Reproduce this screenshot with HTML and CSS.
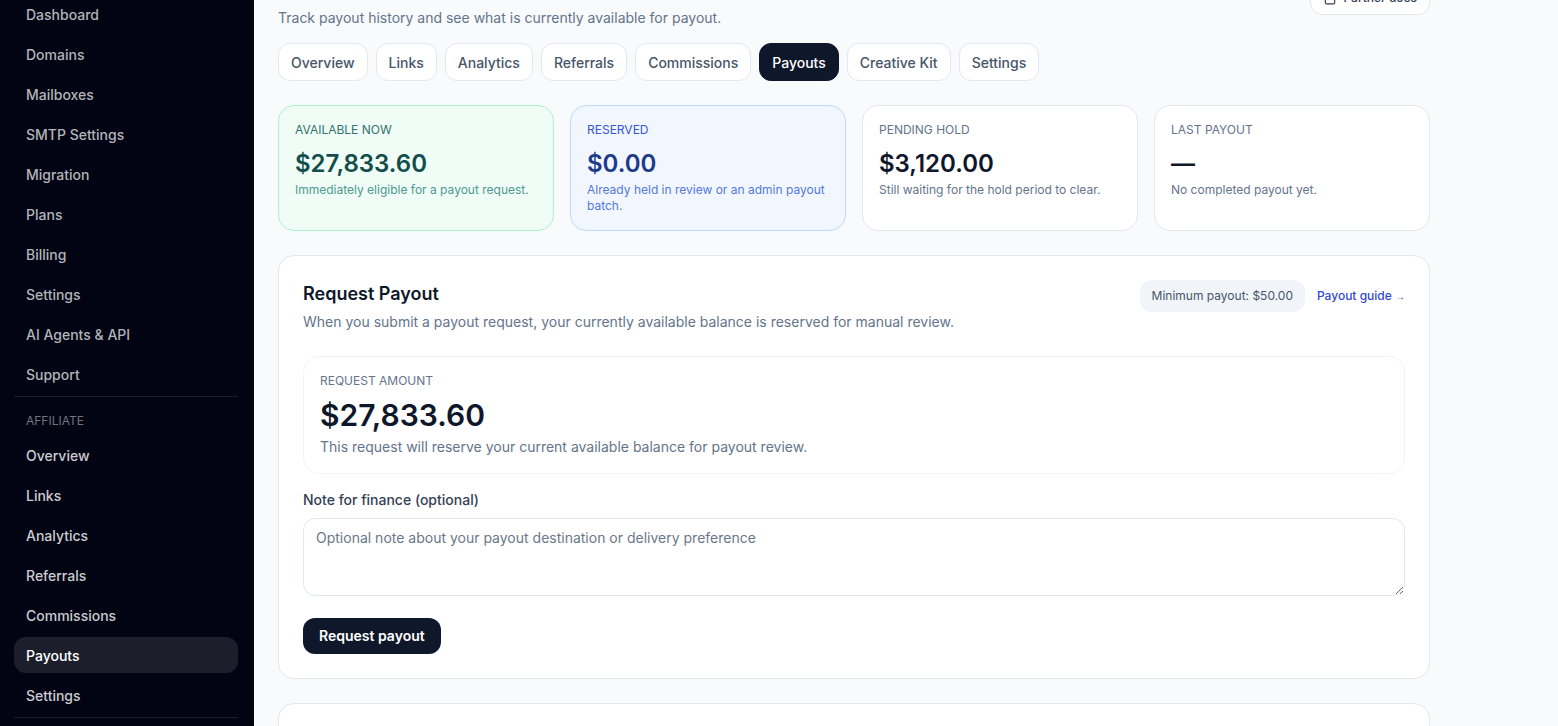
FILE: index.html
```html
<!DOCTYPE html>
<html lang="en">
<head>
  <meta charset="UTF-8">
  <meta name="viewport" content="width=device-width, initial-scale=1.0">
  <title>Payouts</title>
  <link rel="stylesheet" href="styles.css">
</head>
<body>
  <div class="app">
    <aside class="sidebar">
      <nav class="side-nav">
        <a href="#">Dashboard</a>
        <a href="#">Domains</a>
        <a href="#">Mailboxes</a>
        <a href="#">SMTP Settings</a>
        <a href="#">Migration</a>
        <a href="#">Plans</a>
        <a href="#">Billing</a>
        <a href="#">Settings</a>
        <a href="#">AI Agents &amp; API</a>
        <a href="#">Support</a>
      </nav>
      <nav class="side-nav side-nav-affiliate">
        <p class="side-title">Affiliate</p>
        <a href="#">Overview</a>
        <a href="#">Links</a>
        <a href="#">Analytics</a>
        <a href="#">Referrals</a>
        <a href="#">Commissions</a>
        <a href="#" class="active">Payouts</a>
        <a href="#">Settings</a>
      </nav>
      <div class="side-footer"></div>
    </aside>

    <main class="main">
      <div class="content">
        <header class="page-header">
          <div>
            <h1>Payouts</h1>
            <p class="subtitle">Track payout history and see what is currently available for payout.</p>
          </div>
          <a href="#" class="docs-link">
            <svg width="14" height="14" viewBox="0 0 24 24" fill="none" stroke="currentColor" stroke-width="2" stroke-linecap="round" stroke-linejoin="round">
              <path d="M6 2h8l6 6v12a2 2 0 0 1-2 2H6a2 2 0 0 1-2-2V4a2 2 0 0 1 2-2z"/>
              <path d="M14 2v6h6"/>
            </svg>
            Partner docs
          </a>
        </header>

        <nav class="tabs">
          <a href="#">Overview</a>
          <a href="#">Links</a>
          <a href="#">Analytics</a>
          <a href="#">Referrals</a>
          <a href="#">Commissions</a>
          <a href="#" class="active">Payouts</a>
          <a href="#">Creative Kit</a>
          <a href="#">Settings</a>
        </nav>

        <section class="stats">
          <div class="stat stat-green">
            <p class="label">Available now</p>
            <p class="value">$27,833.60</p>
            <p class="hint">Immediately eligible for a payout request.</p>
          </div>
          <div class="stat stat-blue">
            <p class="label">Reserved</p>
            <p class="value">$0.00</p>
            <p class="hint">Already held in review or an admin payout batch.</p>
          </div>
          <div class="stat">
            <p class="label">Pending hold</p>
            <p class="value">$3,120.00</p>
            <p class="hint">Still waiting for the hold period to clear.</p>
          </div>
          <div class="stat">
            <p class="label">Last payout</p>
            <p class="value">—</p>
            <p class="hint">No completed payout yet.</p>
          </div>
        </section>

        <section class="panel">
          <div class="panel-header">
            <div>
              <h2>Request Payout</h2>
              <p class="text">When you submit a payout request, your currently available balance is reserved for manual review.</p>
            </div>
            <div class="panel-actions">
              <span class="pill">Minimum payout: $50.00</span>
              <a href="#" class="guide">Payout guide <span class="arrow">→</span></a>
            </div>
          </div>

          <div class="amount">
            <p class="label">Request amount</p>
            <p class="value">$27,833.60</p>
            <p class="text">This request will reserve your current available balance for payout review.</p>
          </div>

          <form class="request-form">
            <label for="note">Note for finance (optional)</label>
            <textarea id="note" placeholder="Optional note about your payout destination or delivery preference"></textarea>
            <button type="button">Request payout</button>
          </form>
        </section>

        <section class="panel">
          <h2>Payout History</h2>
        </section>
      </div>
    </main>
  </div>
</body>
</html>
```
FILE: styles.css
```css
* {
  box-sizing: border-box;
}

body {
  margin: 0;
  height: 100vh;
  overflow: hidden;
  font-family: Inter, "Liberation Sans", sans-serif;
  font-size: 14px;
  line-height: 20px;
  color: #0f172a;
  background: #f8fafc;
}

h1, h2, p {
  margin: 0;
}

a {
  color: inherit;
  text-decoration: none;
}

.app {
  display: flex;
  height: 100vh;
}

/* sidebar */
.sidebar {
  flex: none;
  width: 254px;
  padding: 0 16px 0 14px;
  background: #020414;
  overflow: hidden;
}

.side-nav {
  display: flex;
  flex-direction: column;
  gap: 4px;
  margin-top: -4px;
  padding-bottom: 4px;
}

.side-nav a {
  padding: 9px 12px 7px;
  border-radius: 12px;
  font-weight: 500;
  color: #b3b4b9;
}

.side-nav-affiliate {
  margin-top: 0;
  border-top: 1px solid #1b1d2b;
}

.side-nav-affiliate a {
  color: #ccccd0;
}

.side-nav a.active {
  background: #1c1e2c;
  color: #fff;
}

.side-title {
  padding: 16px 12px 4px;
  font-size: 12px;
  line-height: 16px;
  text-transform: uppercase;
  color: #73747d;
}

.side-footer {
  border-top: 1px solid #1b1d2b;
}

/* page */
.main {
  flex: 1;
  min-width: 0;
  padding: 0 24px;
  overflow: hidden;
}

.content {
  display: flex;
  flex-direction: column;
  gap: 24px;
  max-width: 1152px;
  margin-top: -32px;
}

.page-header {
  display: flex;
  justify-content: space-between;
  align-items: center;
  margin-bottom: -9px;
}

h1 {
  font-size: 28px;
  line-height: 32px;
  font-weight: 600;
}

.subtitle {
  margin-top: 8px;
  color: #64748b;
}

.docs-link {
  display: flex;
  align-items: center;
  gap: 6px;
  padding: 7px 12px;
  border: 1px solid #e2e8f0;
  border-radius: 12px;
  background: #fff;
  font-size: 12px;
  line-height: 18px;
  font-weight: 500;
  color: #334155;
}

.tabs {
  display: flex;
  flex-wrap: wrap;
  gap: 8px;
}

.tabs a {
  padding: 9px 12px 7px;
  border: 1px solid #e2e8f0;
  border-radius: 12px;
  background: #fff;
  font-weight: 500;
  color: #475569;
}

.tabs a.active {
  border-color: #0f172a;
  background: #0f172a;
  color: #fff;
}

/* stat cards */
.stats {
  display: grid;
  grid-template-columns: repeat(4, 1fr);
  gap: 16px;
}

.stat {
  padding: 16px;
  border: 1px solid #e2e8f0;
  border-radius: 16px;
  background: #fff;
}

.label {
  font-size: 12px;
  line-height: 16px;
  text-transform: uppercase;
  color: #64748b;
}

.value {
  margin: 10px 0 2px;
  font-size: 24px;
  line-height: 32px;
  font-weight: 600;
}

.hint {
  font-size: 12px;
  line-height: 16px;
  color: #64748b;
}

.stat-green {
  border-color: #a7f3d0;
  background: #effdf6;
}

.stat-green .label {
  color: #33736e;
}

.stat-green .value {
  color: #134e4a;
}

.stat-green .hint {
  color: #4f9990;
}

.stat-blue {
  border-color: #bfdbfe;
  background: #f2f7ff;
}

.stat-blue .label {
  color: #3555d8;
}

.stat-blue .value {
  color: #1e3a8a;
}

.stat-blue .hint {
  color: #5379dc;
}

/* panels */
.panel {
  padding: 24px;
  border: 1px solid #e2e8f0;
  border-radius: 16px;
  background: #fff;
}

.panel-header {
  display: flex;
  justify-content: space-between;
  align-items: flex-start;
  gap: 12px;
}

h2 {
  font-size: 18px;
  line-height: 28px;
  font-weight: 600;
}

.text {
  color: #64748b;
}

.panel-header .text {
  margin-top: 4px;
}

.panel-actions {
  display: flex;
  align-items: center;
  gap: 12px;
  font-size: 12px;
  line-height: 16px;
  white-space: nowrap;
}

.pill {
  padding: 8px 12px;
  border-radius: 12px;
  background: #f1f5f9;
  color: #475569;
}

.guide {
  font-weight: 500;
  color: #3048cf;
}

.arrow {
  font-family: "Liberation Sans", sans-serif;
  font-size: 10px;
  font-weight: 400;
}

.amount {
  margin-top: 24px;
  padding: 16px;
  border: 1px solid #f1f5f9;
  border-radius: 16px;
}

.amount .value {
  margin: 8px 0 4px;
  font-size: 30px;
  line-height: 36px;
}

.request-form {
  display: flex;
  flex-direction: column;
  align-items: flex-start;
  margin-top: 16px;
}

.request-form label {
  font-weight: 500;
  color: #334155;
}

.request-form textarea {
  width: 100%;
  height: 78px;
  margin: 8px 0 22px;
  padding: 9px 12px 7px;
  border: 1px solid #e2e8f0;
  border-radius: 12px;
  background: #fff;
  font: inherit;
  color: #0f172a;
  resize: vertical;
}

.request-form textarea::placeholder {
  color: #6b7789;
}

.request-form button {
  padding: 8px 16px;
  border: none;
  border-radius: 12px;
  background: #0f172a;
  font: inherit;
  font-weight: 600;
  color: #fff;
  cursor: pointer;
}
```
